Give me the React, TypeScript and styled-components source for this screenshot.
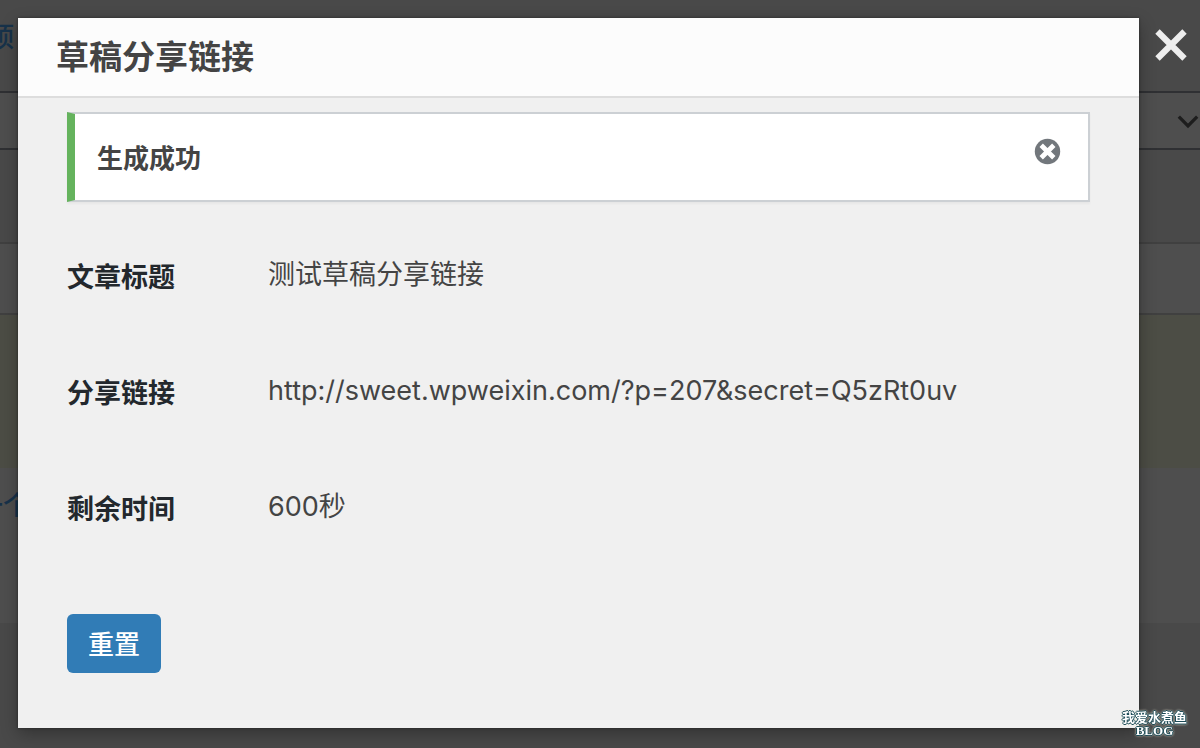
import React from 'react';
import styled, { createGlobalStyle } from 'styled-components';

const GlobalStyle = createGlobalStyle`
  *, *::before, *::after { box-sizing: border-box; }
  body {
    margin: 0;
    background: #494949;
    color: #444;
    font-family: Inter, "Noto Sans CJK SC", sans-serif;
    font-size: 27px;
    line-height: 42px;
  }
`;

const Page = styled.div`
  display: flex;
  flex-direction: column;
  min-height: 100vh;
`;

const Band = styled.div<{ $height: number; $color: string; $line?: string }>`
  display: flex;
  justify-content: space-between;
  height: ${(p) => p.$height}px;
  background: ${(p) => p.$color};
  border-bottom: ${(p) => (p.$line ? `2px solid ${p.$line}` : 'none')};
`;

const BackLink = styled.a<{ $width: number }>`
  display: flex;
  justify-content: flex-end;
  width: ${(p) => p.$width}px;
  padding-top: 17px;
  overflow: hidden;
  color: #17324a;
  font-weight: 500;
  text-decoration: none;
  white-space: nowrap;
`;

const Chevron = styled.svg`
  width: 24px;
  margin-left: auto;
`;

const Overlay = styled.div`
  position: fixed;
  inset: 0;
  display: grid;
  grid-template-columns: minmax(0, 1fr) 61px;
  padding: 18px 0 20px 18px;
`;

const Dialog = styled.section`
  display: flex;
  flex-direction: column;
  overflow: auto;
  background: #f0f0f0;
`;

const Shadowed = styled.div`
  display: grid;
  box-shadow: 0 6px 16px rgba(0, 0, 0, 0.3), 0 0 3px rgba(0, 0, 0, 0.4);
`;

const Header = styled.header`
  padding: 18px 38px;
  background: #fcfcfc;
  border-bottom: 2px solid #ddd;
`;

const Title = styled.h1`
  margin: 0;
  font-size: 33px;
  font-weight: 600;
  line-height: 42px;
`;

const Content = styled.div`
  padding: 14px 49px 48px;
`;

const Notice = styled.div`
  display: flex;
  align-items: flex-start;
  justify-content: space-between;
  height: 90px;
  padding: 24px 27px 24px 22px;
  background: #fff;
  border: 2px solid #ccd0d4;
  border-left: 8px solid #65b35d;
  box-shadow: 0 2px 2px rgba(0, 0, 0, 0.04);
`;

const NoticeText = styled.strong`
  font-size: 26px;
  font-weight: 600;
  line-height: 42px;
`;

const IconButton = styled.button`
  display: flex;
  padding: 0;
  border: 0;
  background: none;
  cursor: pointer;
`;

const Details = styled.table`
  width: 100%;
  margin: 18px 0 46px;
  border-collapse: collapse;
`;

const Label = styled.th`
  width: 201px;
  height: 116px;
  padding: 40px 0;
  color: #23282d;
  font-weight: 600;
  line-height: 36px;
  text-align: left;
  vertical-align: top;
`;

const Value = styled.td`
  padding: 34px 0;
  vertical-align: top;
`;

const ResetButton = styled.button`
  padding: 9px 21px 7px;
  border: 0;
  border-radius: 6px;
  background: #317cb6;
  color: #fff;
  font-family: inherit;
  font-size: 26px;
  font-weight: 500;
  line-height: 43px;
  cursor: pointer;
`;

const CloseButton = styled(IconButton)`
  align-self: start;
  justify-content: center;
  padding: 11px 0 0 3px;
`;

const Watermark = styled.div`
  position: fixed;
  right: 13px;
  bottom: 11px;
  display: grid;
  justify-items: center;
  color: #fff;
  font-family: "Liberation Serif", "Noto Sans CJK SC", serif;
  font-size: 13px;
  font-weight: 700;
  line-height: 13px;
  text-shadow: 1px 0 #1c4b57, -1px 0 #1c4b57, 0 1px #1c4b57, 0 -1px #1c4b57,
    0 0 3px #f5f0dc, 0 0 3px #f5f0dc;
`;

const rows = [
  ['文章标题', '测试草稿分享链接'],
  ['分享链接', 'http://sweet.wpweixin.com/?p=207&secret=Q5zRt0uv'],
  ['剩余时间', '600秒'],
];

export default function App() {
  return (
    <>
      <GlobalStyle />
      <Page>
        <Band $height={93} $color="#494949" $line="#2f3033">
          <BackLink href="#" $width={14}>顶</BackLink>
        </Band>
        <Band $height={57} $color="#4e4e4e" $line="#2f3033">
          <Chevron viewBox="0 0 24 57" fill="none" stroke="#1d1d1d" strokeWidth="3.4">
            <path d="M2.5 24.5 12 34 21.5 24.5" />
          </Chevron>
        </Band>
        <Band $height={94} $color="#494949" $line="#404040" />
        <Band $height={71} $color="#4e4e4e" $line="#404040" />
        <Band $height={153} $color="#4c4d45" />
        <Band $height={155} $color="#4e4e4e">
          <BackLink href="#" $width={30}>一个</BackLink>
        </Band>
      </Page>
      <Overlay>
        <Shadowed>
          <Dialog role="dialog" aria-labelledby="dialog-title">
            <Header>
              <Title id="dialog-title">草稿分享链接</Title>
            </Header>
            <Content>
              <Notice role="status">
                <NoticeText>生成成功</NoticeText>
                <IconButton type="button" aria-label="忽略此通知">
                  <svg width="28" height="28" viewBox="0 0 28 28">
                    <circle cx="14.5" cy="13.5" r="12.7" fill="#72777c" />
                    <path d="M8.2 7.2 20.8 19.8M20.8 7.2 8.2 19.8" stroke="#fff" strokeWidth="4.8" />
                  </svg>
                </IconButton>
              </Notice>
              <Details>
                <tbody>
                  {rows.map(([label, value]) => (
                    <tr key={label}>
                      <Label scope="row">{label}</Label>
                      <Value>{value}</Value>
                    </tr>
                  ))}
                </tbody>
              </Details>
              <ResetButton type="button">重置</ResetButton>
            </Content>
          </Dialog>
        </Shadowed>
        <CloseButton type="button" aria-label="关闭">
          <svg width="32" height="32" viewBox="0 0 32 32" stroke="#eee" strokeWidth="6.2">
            <path d="M2.5 2.5 29.5 29.5M29.5 2.5 2.5 29.5" />
          </svg>
        </CloseButton>
      </Overlay>
      <Watermark>
        <span>我爱水煮鱼</span>
        <span>BLOG</span>
      </Watermark>
    </>
  );
}
